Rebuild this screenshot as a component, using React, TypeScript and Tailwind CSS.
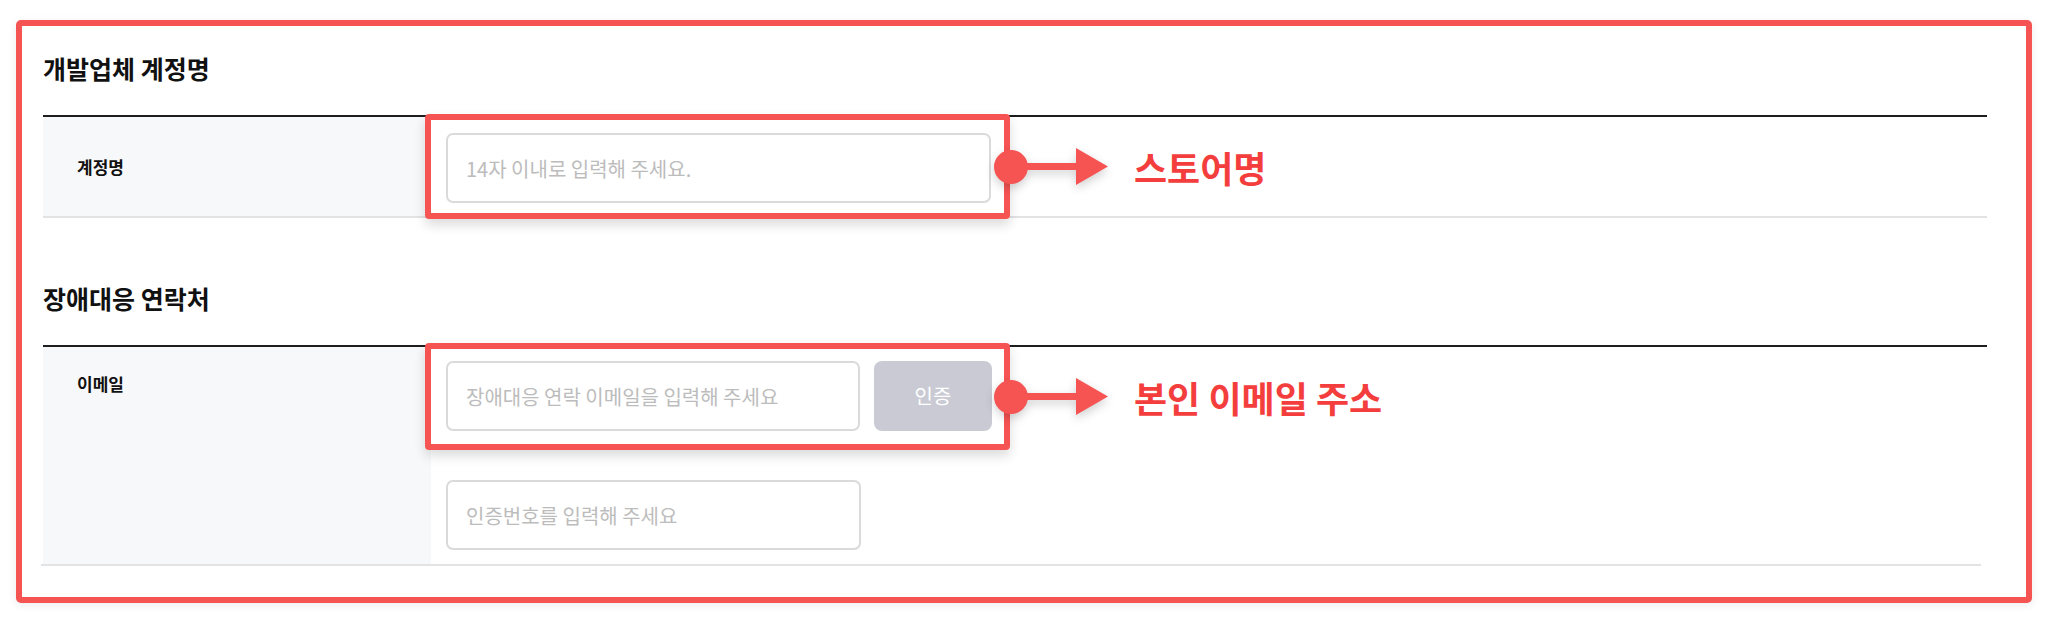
import React from 'react'

function Annotation({ text }: { text: string }) {
  // dot + arrow + callout text, hanging off the right edge of the red box
  return (
    <div className="absolute left-[563px] top-1/2 -translate-y-1/2 flex items-center">
      <div className="flex items-center drop-shadow-[0_4px_5px_rgba(0,0,0,0.18)]">
        <div className="w-[34px] h-[34px] rounded-full bg-[#f65353]" />
        <div className="w-[50px] h-[7px] -ml-[1px] bg-[#f65353]" />
        <svg width="32" height="37" viewBox="0 0 32 37" className="-ml-[1px]">
          <polygon points="0,0 32,18.5 0,37" fill="#f65353" />
        </svg>
      </div>
      <span className="ml-[26px] text-[36px] leading-[44px] font-bold text-[#f43e3e] whitespace-nowrap">
        {text}
      </span>
    </div>
  )
}

function TextInput({ placeholder, className = '' }: { placeholder: string; className?: string }) {
  return (
    <input
      type="text"
      placeholder={placeholder}
      className={`h-[70px] rounded-[7px] border-2 border-[#dadada] bg-white pl-[18px] text-[20px] text-[#222] placeholder:text-[#bcbcbc] outline-none ${className}`}
    />
  )
}

export default function App() {
  return (
    <div className="min-h-screen bg-white font-['Noto_Sans_CJK_KR','Noto_Sans',sans-serif]">
      <div className="pl-[16px] pt-[20px]">
        <div className="w-[2016px] h-[583px] rounded-[5px] border-[6px] border-[#f65353] bg-white shadow-[0_2px_10px_rgba(0,0,0,0.08)] pl-[21px] pt-[24px]">
          {/* 개발업체 계정명 */}
          <h2 className="text-[25px] leading-[36px] font-bold text-[#111]">개발업체 계정명</h2>
          <div className="mt-[29px] w-[1944px] border-t-2 border-[#1e1e1e]">
            <div className="flex border-b-2 border-[#e3e3e3]">
              <div className="w-[388px] shrink-0 bg-[#f7f8fa] pl-[34px] flex items-center">
                <span className="text-[17px] leading-[24px] font-bold text-[#111]">계정명</span>
              </div>
              <div className="relative flex-1 pl-[15px] pt-[16px] pb-[13px]">
                <TextInput placeholder="14자 이내로 입력해 주세요." className="w-[545px]" />
                <div className="absolute -left-[6px] -top-[3px] w-[585px] h-[105px] rounded-[4px] border-[6px] border-[#f65353] shadow-[0_6px_12px_rgba(0,0,0,0.14)]">
                  <Annotation text="스토어명" />
                </div>
              </div>
            </div>
          </div>

          {/* 장애대응 연락처 */}
          <h2 className="mt-[62px] text-[25px] leading-[36px] font-bold text-[#111]">장애대응 연락처</h2>
          <div className="mt-[29px] w-[1944px] border-t-2 border-[#1e1e1e]">
            <div className="flex">
              <div className="w-[388px] shrink-0 bg-[#f7f8fa] pl-[34px] pt-[25px]">
                <span className="text-[17px] leading-[24px] font-bold text-[#111]">이메일</span>
              </div>
              <div className="relative flex-1 pl-[15px] pt-[14px] pb-[14px]">
                <div className="flex gap-[14px]">
                  <TextInput placeholder="장애대응 연락 이메일을 입력해 주세요" className="w-[414px]" />
                  <button className="w-[118px] h-[70px] rounded-[8px] bg-[#c9cad4] text-[20px] text-white">
                    인증
                  </button>
                </div>
                <TextInput placeholder="인증번호를 입력해 주세요" className="mt-[49px] w-[415px]" />
                <div className="absolute -left-[6px] -top-[4px] w-[585px] h-[107px] rounded-[4px] border-[6px] border-[#f65353] shadow-[0_6px_12px_rgba(0,0,0,0.14)]">
                  <Annotation text="본인 이메일 주소" />
                </div>
              </div>
            </div>
            <div className="-ml-[2px] w-[1940px] h-[2px] bg-[#e3e3e3]" />
          </div>
        </div>
      </div>
    </div>
  )
}
